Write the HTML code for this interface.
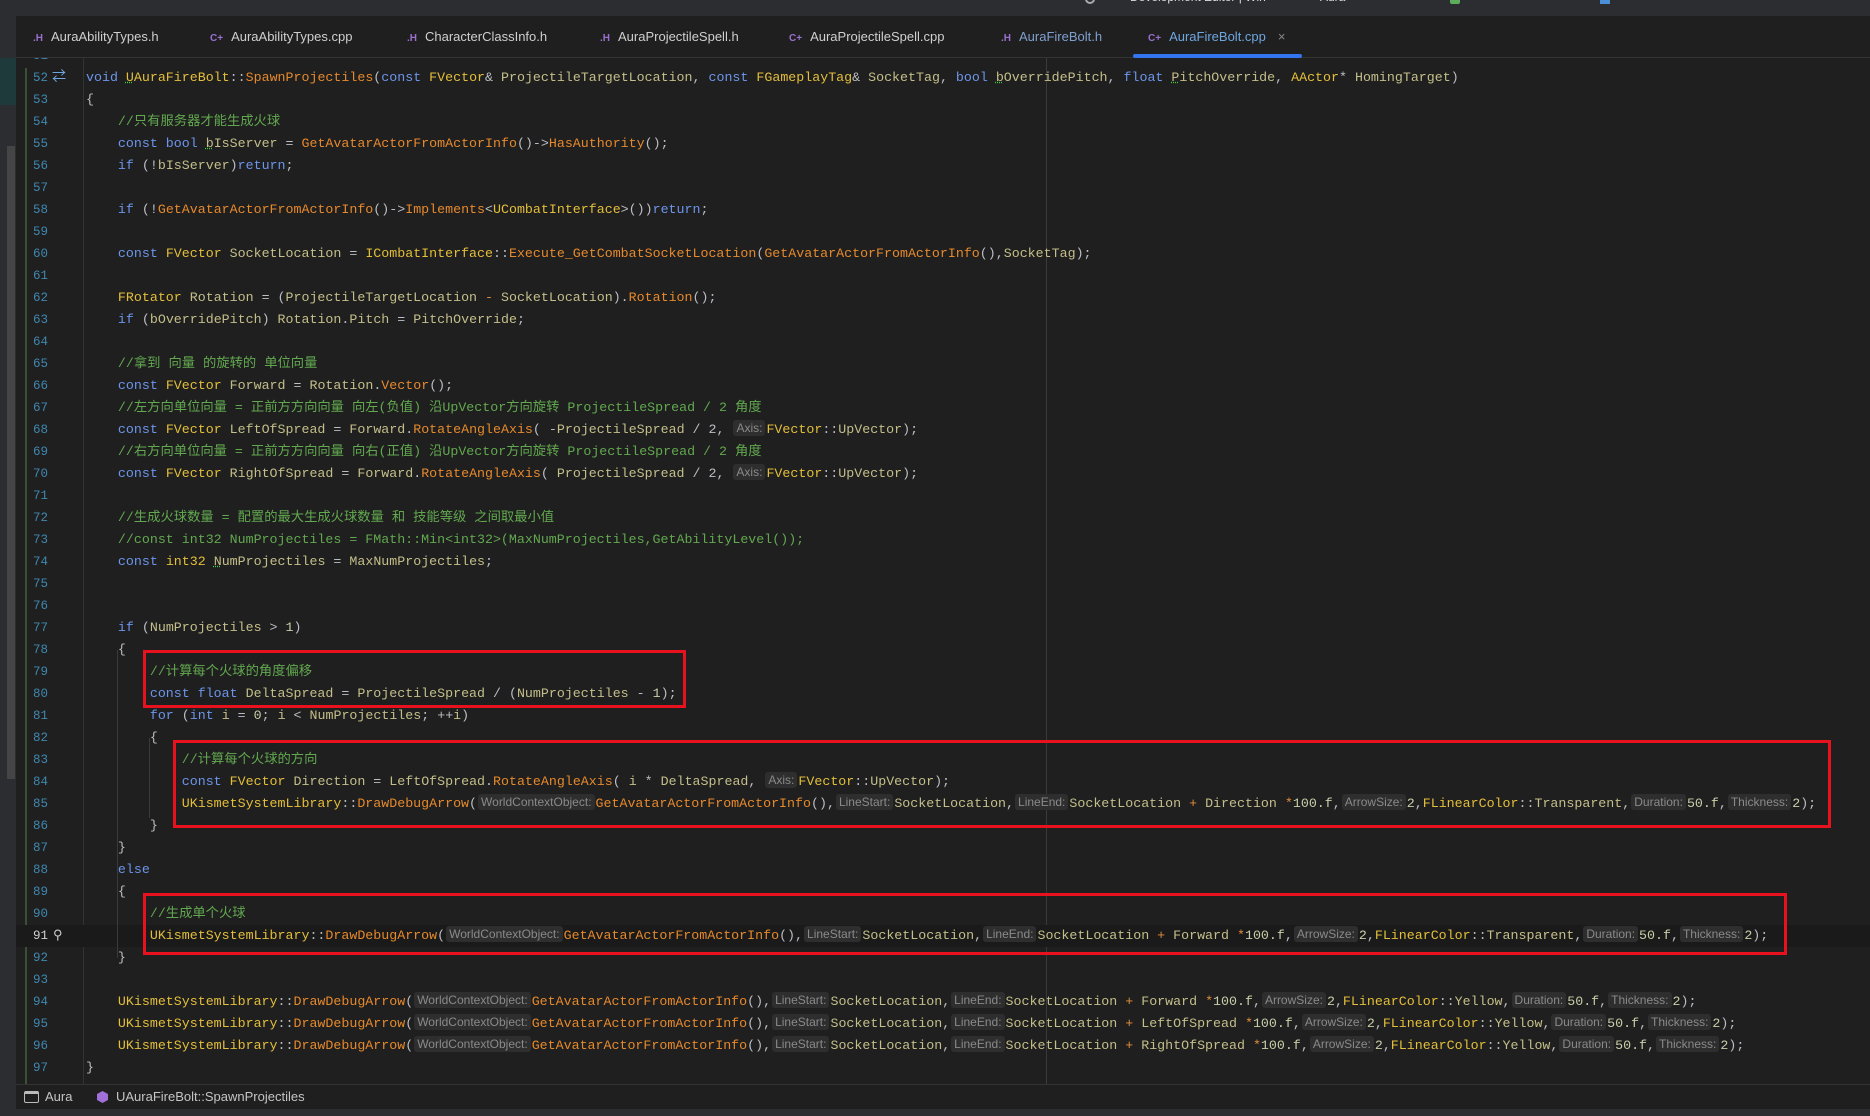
<!DOCTYPE html>
<html><head><meta charset="utf-8"><style>
*{margin:0;padding:0;box-sizing:border-box}
body{width:1870px;height:1116px;background:#1f1f1f;position:relative;overflow:hidden;font-family:"Liberation Mono","Noto Sans CJK SC",monospace}
.abs{position:absolute}
#top{left:0;top:0;width:1870px;height:16px;background:#2b2d30;overflow:hidden}
#tabs{left:16px;top:16px;width:1854px;height:42px;background:#1f1f1f;border-bottom:1px solid #333}
.tab{position:absolute;top:13px;font:13px "Liberation Sans",sans-serif;color:#cfcfcf;white-space:nowrap}
.ti{font-size:10px;color:#9a6fd0;margin-right:8px;font-weight:bold}
#leftstrip{left:0;top:16px;width:16px;height:1093px;background:#2b2d30}
.ln{position:absolute;left:16px;width:32px;text-align:right;font-size:12.5px;color:#3f88b0;line-height:22px;height:22px}
.cl{position:absolute;left:86px;font-size:13.3px;line-height:22px;height:22px;white-space:pre;color:#bcbec4}
.k{color:#6c95eb}.t{color:#e4bf3a}.f{color:#e6892c}.v{color:#c4bf8a}.c{color:#62a84f}.n{color:#c8cfa8}.o{color:#e08c3a}
.h{display:inline-block;font:12px "Liberation Sans",sans-serif;color:#8a8a8a;background:#2e2e2e;border-radius:3px;padding:0 3px;line-height:16px;margin:0 1px;vertical-align:1px}
.u{text-decoration:underline dotted #3fd03f}
.red{position:absolute;border:3px solid #e8121f}
.g{position:absolute;width:1px;background:#3a3a3a}
#status{left:16px;top:1084px;width:1854px;height:25px;background:#1f1f1f;border-top:1px solid #333;font:13px "Liberation Sans",sans-serif;color:#c4c4c4}
#bot{left:0;top:1109px;width:1870px;height:7px;background:#2b2d30}
</style></head><body>
<div class="abs" id="top">
<div class="abs" style="left:1085px;top:-6px;width:10px;height:10px;border:2px solid #aaa;border-radius:50%"></div>
<div class="abs" style="left:1130px;top:-10px;font:12px 'Liberation Sans',sans-serif;color:#ddd">Development Editor | Win</div>
<div class="abs" style="left:1320px;top:-10px;font:12px 'Liberation Sans',sans-serif;color:#ddd">Aura</div>
<div class="abs" style="left:1450px;top:-4px;width:10px;height:8px;background:#5cae5c;border-radius:2px"></div>
<div class="abs" style="left:1600px;top:-4px;width:10px;height:8px;background:#4a8fd8"></div>
</div>
<div class="abs" id="leftstrip"><div class="abs" style="left:0;top:42px;width:16px;height:47px;background:#1f3a3a"></div><div class="abs" style="left:7px;top:130px;width:8px;height:633px;background:#454545"></div></div>

<div class="abs" style="left:83px;top:58px;width:1px;height:1026px;background:#333"></div>
<div class="abs" style="left:25px;top:68px;width:2px;height:1016px;background:#3b5136"></div>
<div class="abs" style="left:1046px;top:58px;width:1px;height:1026px;background:#3a3a3a"></div>
<div class="abs" style="left:16px;top:925px;width:1854px;height:22px;background:#1a1a1a"></div>
<div class="g" style="left:117px;top:650px;height:308px"></div>
<div class="g" style="left:149px;top:738px;height:80px"></div>

<div class="ln" style="top:45px">51</div>
<div class="abs" id="tabs">
<div class="tab" style="left:17px"><span class="ti">.H</span>AuraAbilityTypes.h</div>
<div class="tab" style="left:194px"><span class="ti">C+</span>AuraAbilityTypes.cpp</div>
<div class="tab" style="left:391px"><span class="ti">.H</span>CharacterClassInfo.h</div>
<div class="tab" style="left:584px"><span class="ti">.H</span>AuraProjectileSpell.h</div>
<div class="tab" style="left:773px"><span class="ti">C+</span>AuraProjectileSpell.cpp</div>
<div class="tab" style="left:985px;color:#7f9fd0"><span class="ti">.H</span>AuraFireBolt.h</div>
<div class="tab" style="left:1132px;color:#6ea6e0"><span class="ti">C+</span>AuraFireBolt.cpp<span style="color:#888;margin-left:12px">×</span></div>
<div class="abs" style="left:1117px;top:38px;width:169px;height:4px;background:#3574f0;border-radius:2px"></div>
</div>
<div class="ln" style="top:67px">52</div><div class="abs" style="left:52px;top:67px;line-height:22px;color:#6ea6e0;font-size:14px">⇄</div>
<div class="cl" style="top:67px"><span class="k">void</span> <span class="t"><span class="u">U</span>AuraFireBolt</span>::<span class="f">SpawnProjectiles</span>(<span class="k">const</span> <span class="t">FVector</span>&amp; <span class="v">ProjectileTargetLocation</span>, <span class="k">const</span> <span class="t">FGameplayTag</span>&amp; <span class="v">SocketTag</span>, <span class="k">bool</span> <span class="v"><span class="u">b</span>OverridePitch</span>, <span class="k">float</span> <span class="v"><span class="u">P</span>itchOverride</span>, <span class="t">AActor</span>* <span class="v">HomingTarget</span>)</div>
<div class="ln" style="top:89px">53</div><div class="cl" style="top:89px">{</div>
<div class="ln" style="top:111px">54</div><div class="cl c" style="top:111px">    //只有服务器才能生成火球</div>
<div class="ln" style="top:133px">55</div><div class="cl" style="top:133px">    <span class="k">const bool</span> <span class="v"><span class="u">b</span>IsServer</span> = <span class="f">GetAvatarActorFromActorInfo</span>()-&gt;<span class="f">HasAuthority</span>();</div>
<div class="ln" style="top:155px">56</div><div class="cl" style="top:155px">    <span class="k">if</span> (!<span class="v">bIsServer</span>)<span class="k">return</span>;</div>
<div class="ln" style="top:177px">57</div>
<div class="ln" style="top:199px">58</div><div class="cl" style="top:199px">    <span class="k">if</span> (!<span class="f">GetAvatarActorFromActorInfo</span>()-&gt;<span class="f">Implements</span>&lt;<span class="t">UCombatInterface</span>&gt;())<span class="k">return</span>;</div>
<div class="ln" style="top:221px">59</div>
<div class="ln" style="top:243px">60</div><div class="cl" style="top:243px">    <span class="k">const</span> <span class="t">FVector</span> <span class="v">SocketLocation</span> = <span class="t">ICombatInterface</span>::<span class="f">Execute_GetCombatSocketLocation</span>(<span class="f">GetAvatarActorFromActorInfo</span>(),<span class="v">SocketTag</span>);</div>
<div class="ln" style="top:265px">61</div>
<div class="ln" style="top:287px">62</div><div class="cl" style="top:287px">    <span class="t">FRotator</span> <span class="v">Rotation</span> = (<span class="v">ProjectileTargetLocation</span> <span class="o">-</span> <span class="v">SocketLocation</span>).<span class="f">Rotation</span>();</div>
<div class="ln" style="top:309px">63</div><div class="cl" style="top:309px">    <span class="k">if</span> (<span class="v">bOverridePitch</span>) <span class="v">Rotation</span>.<span class="v">Pitch</span> = <span class="v">PitchOverride</span>;</div>
<div class="ln" style="top:331px">64</div>
<div class="ln" style="top:353px">65</div><div class="cl c" style="top:353px">    //拿到 向量 的旋转的 单位向量</div>
<div class="ln" style="top:375px">66</div><div class="cl" style="top:375px">    <span class="k">const</span> <span class="t">FVector</span> <span class="v">Forward</span> = <span class="v">Rotation</span>.<span class="f">Vector</span>();</div>
<div class="ln" style="top:397px">67</div><div class="cl c" style="top:397px">    //左方向单位向量 = 正前方方向向量 向左(负值) 沿UpVector方向旋转 ProjectileSpread / 2 角度</div>
<div class="ln" style="top:419px">68</div><div class="cl" style="top:419px">    <span class="k">const</span> <span class="t">FVector</span> <span class="v">LeftOfSpread</span> = <span class="v">Forward</span>.<span class="f">RotateAngleAxis</span>( -<span class="v">ProjectileSpread</span> / 2, <span class="h">Axis:</span><span class="t">FVector</span>::<span class="v">UpVector</span>);</div>
<div class="ln" style="top:441px">69</div><div class="cl c" style="top:441px">    //右方向单位向量 = 正前方方向向量 向右(正值) 沿UpVector方向旋转 ProjectileSpread / 2 角度</div>
<div class="ln" style="top:463px">70</div><div class="cl" style="top:463px">    <span class="k">const</span> <span class="t">FVector</span> <span class="v">RightOfSpread</span> = <span class="v">Forward</span>.<span class="f">RotateAngleAxis</span>( <span class="v">ProjectileSpread</span> / 2, <span class="h">Axis:</span><span class="t">FVector</span>::<span class="v">UpVector</span>);</div>
<div class="ln" style="top:485px">71</div>
<div class="ln" style="top:507px">72</div><div class="cl c" style="top:507px">    //生成火球数量 = 配置的最大生成火球数量 和 技能等级 之间取最小值</div>
<div class="ln" style="top:529px">73</div><div class="cl c" style="top:529px">    //const int32 NumProjectiles = FMath::Min&lt;int32&gt;(MaxNumProjectiles,GetAbilityLevel());</div>
<div class="ln" style="top:551px">74</div><div class="cl" style="top:551px">    <span class="k">const</span> <span class="t">int32</span> <span class="v"><span class="u">N</span>umProjectiles</span> = <span class="v">MaxNumProjectiles</span>;</div>
<div class="ln" style="top:573px">75</div>
<div class="ln" style="top:595px">76</div>
<div class="ln" style="top:617px">77</div><div class="cl" style="top:617px">    <span class="k">if</span> (<span class="v">NumProjectiles</span> &gt; <span class="n">1</span>)</div>
<div class="ln" style="top:639px">78</div><div class="cl" style="top:639px">    {</div>
<div class="ln" style="top:661px">79</div><div class="cl c" style="top:661px">        //计算每个火球的角度偏移</div>
<div class="ln" style="top:683px">80</div><div class="cl" style="top:683px">        <span class="k">const float</span> <span class="v">DeltaSpread</span> = <span class="v">ProjectileSpread</span> / (<span class="v">NumProjectiles</span> - <span class="n">1</span>);</div>
<div class="ln" style="top:705px">81</div><div class="cl" style="top:705px">        <span class="k">for</span> (<span class="k">int</span> <span class="v">i</span> = <span class="n">0</span>; <span class="v">i</span> &lt; <span class="v">NumProjectiles</span>; ++<span class="v">i</span>)</div>
<div class="ln" style="top:727px">82</div><div class="cl" style="top:727px">        {</div>
<div class="ln" style="top:749px">83</div><div class="cl c" style="top:749px">            //计算每个火球的方向</div>
<div class="ln" style="top:771px">84</div><div class="cl" style="top:771px">            <span class="k">const</span> <span class="t">FVector</span> <span class="v">Direction</span> = <span class="v">LeftOfSpread</span>.<span class="f">RotateAngleAxis</span>( <span class="v">i</span> * <span class="v">DeltaSpread</span>, <span class="h">Axis:</span><span class="t">FVector</span>::<span class="v">UpVector</span>);</div>
<div class="ln" style="top:793px">85</div><div class="cl" style="top:793px">            <span class="t">UKismetSystemLibrary</span>::<span class="f">DrawDebugArrow</span>(<span class="h">WorldContextObject:</span><span class="f">GetAvatarActorFromActorInfo</span>(),<span class="h">LineStart:</span><span class="v">SocketLocation</span>,<span class="h">LineEnd:</span><span class="v">SocketLocation</span> <span class="o">+</span> <span class="v">Direction</span> <span class="o">*</span><span class="n">100.f</span>,<span class="h">ArrowSize:</span><span class="n">2</span>,<span class="t">FLinearColor</span>::<span class="v">Transparent</span>,<span class="h">Duration:</span><span class="n">50.f</span>,<span class="h">Thickness:</span><span class="n">2</span>);</div>
<div class="ln" style="top:815px">86</div><div class="cl" style="top:815px">        }</div>
<div class="ln" style="top:837px">87</div><div class="cl" style="top:837px">    }</div>
<div class="ln" style="top:859px">88</div><div class="cl" style="top:859px">    <span class="k">else</span></div>
<div class="ln" style="top:881px">89</div><div class="cl" style="top:881px">    {</div>
<div class="ln" style="top:903px">90</div><div class="cl c" style="top:903px">        //生成单个火球</div>
<div class="ln" style="top:925px;color:#d0d0d0">91</div><div class="abs" style="left:53px;top:925px;line-height:22px;color:#ccc;font-size:13px">⚲</div>
<div class="cl" style="top:925px">        <span class="t">UKismetSystemLibrary</span>::<span class="f">DrawDebugArrow</span>(<span class="h">WorldContextObject:</span><span class="f">GetAvatarActorFromActorInfo</span>(),<span class="h">LineStart:</span><span class="v">SocketLocation</span>,<span class="h">LineEnd:</span><span class="v">SocketLocation</span> <span class="o">+</span> <span class="v">Forward</span> <span class="o">*</span><span class="n">100.f</span>,<span class="h">ArrowSize:</span><span class="n">2</span>,<span class="t">FLinearColor</span>::<span class="v">Transparent</span>,<span class="h">Duration:</span><span class="n">50.f</span>,<span class="h">Thickness:</span><span class="n">2</span>);</div>
<div class="ln" style="top:947px">92</div><div class="cl" style="top:947px">    }</div>
<div class="ln" style="top:969px">93</div>
<div class="ln" style="top:991px">94</div><div class="cl" style="top:991px">    <span class="t">UKismetSystemLibrary</span>::<span class="f">DrawDebugArrow</span>(<span class="h">WorldContextObject:</span><span class="f">GetAvatarActorFromActorInfo</span>(),<span class="h">LineStart:</span><span class="v">SocketLocation</span>,<span class="h">LineEnd:</span><span class="v">SocketLocation</span> <span class="o">+</span> <span class="v">Forward</span> <span class="o">*</span><span class="n">100.f</span>,<span class="h">ArrowSize:</span><span class="n">2</span>,<span class="t">FLinearColor</span>::<span class="v">Yellow</span>,<span class="h">Duration:</span><span class="n">50.f</span>,<span class="h">Thickness:</span><span class="n">2</span>);</div>
<div class="ln" style="top:1013px">95</div><div class="cl" style="top:1013px">    <span class="t">UKismetSystemLibrary</span>::<span class="f">DrawDebugArrow</span>(<span class="h">WorldContextObject:</span><span class="f">GetAvatarActorFromActorInfo</span>(),<span class="h">LineStart:</span><span class="v">SocketLocation</span>,<span class="h">LineEnd:</span><span class="v">SocketLocation</span> <span class="o">+</span> <span class="v">LeftOfSpread</span> <span class="o">*</span><span class="n">100.f</span>,<span class="h">ArrowSize:</span><span class="n">2</span>,<span class="t">FLinearColor</span>::<span class="v">Yellow</span>,<span class="h">Duration:</span><span class="n">50.f</span>,<span class="h">Thickness:</span><span class="n">2</span>);</div>
<div class="ln" style="top:1035px">96</div><div class="cl" style="top:1035px">    <span class="t">UKismetSystemLibrary</span>::<span class="f">DrawDebugArrow</span>(<span class="h">WorldContextObject:</span><span class="f">GetAvatarActorFromActorInfo</span>(),<span class="h">LineStart:</span><span class="v">SocketLocation</span>,<span class="h">LineEnd:</span><span class="v">SocketLocation</span> <span class="o">+</span> <span class="v">RightOfSpread</span> <span class="o">*</span><span class="n">100.f</span>,<span class="h">ArrowSize:</span><span class="n">2</span>,<span class="t">FLinearColor</span>::<span class="v">Yellow</span>,<span class="h">Duration:</span><span class="n">50.f</span>,<span class="h">Thickness:</span><span class="n">2</span>);</div>
<div class="ln" style="top:1057px">97</div><div class="cl" style="top:1057px">}</div>

<div class="red" style="left:143px;top:650px;width:543px;height:58px"></div>
<div class="red" style="left:173px;top:740px;width:1658px;height:88px"></div>
<div class="red" style="left:143px;top:893px;width:1644px;height:62px"></div>

<div class="abs" id="status">
<div class="abs" style="left:8px;top:6px;width:15px;height:12px;border:1.5px solid #bbb;border-radius:2px;border-top-width:3px"></div>
<div class="abs" style="left:29px;top:4px">Aura</div>
<div class="abs" style="left:81px;top:6px;width:11px;height:12px;background:#a070d8;clip-path:polygon(50% 0,100% 25%,100% 75%,50% 100%,0 75%,0 25%)"></div>
<div class="abs" style="left:100px;top:4px">UAuraFireBolt::SpawnProjectiles</div>
</div>
<div class="abs" id="bot"></div>
</body></html>
